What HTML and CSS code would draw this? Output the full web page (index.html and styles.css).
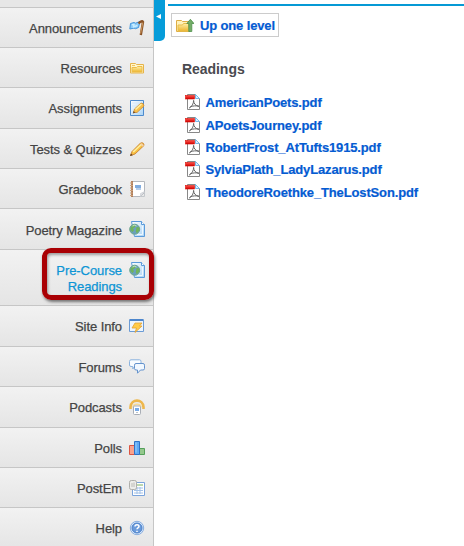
FILE: index.html
```html
<!DOCTYPE html>
<html lang="en">
<head>
<meta charset="utf-8">
<title>Readings</title>
<link rel="stylesheet" href="styles.css">
</head>
<body>
<svg class="defs" aria-hidden="true">
  <defs>
    <linearGradient id="gold" x1="0" y1="0" x2="0" y2="1"><stop offset="0" stop-color="#fff0a8"/><stop offset="1" stop-color="#edb52f"/></linearGradient>
    <linearGradient id="sky" x1="0" y1="0" x2="1" y2="1"><stop offset="0" stop-color="#ffffff"/><stop offset="1" stop-color="#a9d3f6"/></linearGradient>
    <linearGradient id="red" x1="0" y1="0" x2="0" y2="1"><stop offset="0" stop-color="#ff5148"/><stop offset="1" stop-color="#cf0000"/></linearGradient>
    <symbol id="web" viewBox="0 0 16 16">
      <path d="M2.5.5h10l3 3v12h-10z" fill="url(#sky)" stroke="#5b9bda"/>
      <path d="M12.5.5v3h3" fill="#fff" stroke="#5b9bda"/>
      <path d="M13.5 5v8.5H8" fill="none" stroke="#eef8ff"/>
      <circle cx="5.7" cy="8.2" r="5" fill="#6a9fc0" stroke="#6aa58a"/>
      <path d="M1.500 6.500 4 4l3 .3-1 2-2 1 1 2-1.500 2L1.500 9zM7.500 6l2.600.2.3 3-2.500 3-1.200-1.700z" fill="#70b45c"/>
      <path d="M3.500 5q2-1.400 4 0" fill="none" stroke="#c9e6c9"/>
    </symbol>
    <symbol id="pdf" viewBox="0 0 16 16">
      <path d="M2.500.5h8l4 4v11h-12z" fill="#fff" stroke="#888"/>
      <path d="M10.500.5l4 4h-4z" fill="#dcefff" stroke="#79b6e4"/>
      <path d="M4 14.200c3-1.700 4.600-4.500 4.600-7.800 0 3.200 2 5.400 5.400 5.900-3-.8-6-.5-8.800.6" fill="none" stroke="#666"/>
      <rect x=".5" y="1.500" width="9" height="3.500" fill="url(#red)" stroke="#d81008" stroke-width=".6"/>
    </symbol>
  </defs>
</svg>
<div class="page">
  <nav class="sidebar">
    <ul class="tools">
      <li></li>
      <li><a>Announcements</a>
        <svg class="icon" viewBox="0 0 16 16"><path d="M1.500 3.500l3.500-1 1.500.7 4.500-1.700-1.500 6-3 1.200-1.500-.6L.8 9z" fill="#8ccbf8" stroke="#4496dc"/><path d="M3 4.800l2-.3-.5 2.500 4-1.500" fill="none" stroke="#c9edff" stroke-width="1.400"/><path d="M9.500 3.500q3.500-3.500 4.500-1.500l-2.200 13" fill="none" stroke="#8a5327" stroke-width="2.400"/><path d="M13.800 2.500l-2.200 11" stroke="#d09b62"/></svg></li>
      <li><a>Resources</a>
        <svg class="icon" viewBox="0 0 16 16"><path d="M1.500 13v-9.500h5l1 1h7V13z" fill="#fff5cb" stroke="#e6b44a"/><path d="M3 12V7.500h4.500l1-1h4.500V12z" fill="url(#gold)" stroke="#edbd49"/><path d="M3 5.500h3" stroke="#f0c55e"/></svg></li>
      <li><a>Assignments</a>
        <svg class="icon" viewBox="0 0 16 16"><path d="M1.500.5h13v15h-13z" fill="url(#sky)" stroke="#4e8bce"/><path d="M3 3h8M3 6h5" stroke="#d6e9fb"/><path d="M4.500 12.500l1-3.500 6.500-6q3 0 3 3L8 12.500z" fill="#f8c04c" stroke="#c98a35" stroke-width=".8"/><path d="M6.500 9.500l6-5.500" stroke="#fff0a0" stroke-width="1.600"/><path d="M3.800 13.500l.8-2.500 1.900 1.800z" fill="#77502e"/></svg></li>
      <li><a>Tests &amp; Quizzes</a>
        <svg class="icon" viewBox="0 0 16 16"><path d="M1.500 14.500L3 10.500l8.500-8.500q3.500-1 3.500 2.500L6 13z" fill="#f8bf42" stroke="#c98434" stroke-width=".9"/><path d="M4.200 11l8-7.500" stroke="#fff09b" stroke-width="1.700"/><path d="M11 3l2.800 2.800 1-1.300-2-2.300z" fill="#f4d2ae"/><path d="M1 15l1-2.600 1.800 1.800z" fill="#674323"/></svg></li>
      <li><a>Gradebook</a>
        <svg class="icon" viewBox="0 0 16 16"><path d="M3.500.5h12v11l-4 4h-8z" fill="#fff" stroke="#b4b8be"/><path d="M15.500 10.500l-4 5v-3z" fill="#e2e4e8" stroke="#c4c8cc" stroke-width=".6"/><path d="M11.500 15.500h4v-4" fill="none" stroke="#c4c8cc"/><path d="M3 0v16" stroke="#a8693d" stroke-width="1.600"/><path d="M1 2h3M1 4.500h3M1 7h3M1 9.500h3M1 12h3M1 14.500h3" stroke="#cda27c"/><path d="M6 4h6v3H6z" fill="#80acdf"/><path d="M7 8h5" stroke="#6d9bd3"/></svg></li>
      <li class="low"><a>Poetry Magazine</a><svg class="icon"><use href="#web"/></svg></li>
      <li class="current"><a>Pre-Course<br>Readings</a><svg class="icon"><use href="#web"/></svg><span class="highlight"></span></li>
      <li><a>Site Info</a>
        <svg class="icon" viewBox="0 0 16 16"><path d="M.5 1.500h14v12H.5z" fill="#edf5fd" stroke="#6b9bd5"/><path d="M1 2h13" stroke="#4d86cc" stroke-width="2"/><path d="M6 5h7l-2.500 3H13l-7 6.500L7.500 10H3z" fill="#ffcb48" stroke="#e3a134" stroke-width=".8"/></svg></li>
      <li><a>Forums</a>
        <svg class="icon" viewBox="0 0 16 16"><path d="M2 .8h8.500q1.500 0 1.500 1.700V6q0 1.500-1.500 1.500H5.500L3.800 10V7.500H2Q.5 7.500.5 6V2.500Q.5.800 2 .8z" fill="#f8fcff" stroke="#8ab2de"/><path d="M7 4.500h7q1.500 0 1.500 1.700V9.500q0 1.500-1.500 1.500h-2.500l-3 3.200V11H7q-1.500 0-1.500-1.500V6.200q0-1.700 1.500-1.700z" fill="#f1f8ff" stroke="#6493cd"/></svg></li>
      <li><a>Podcasts</a>
        <svg class="icon" viewBox="0 0 16 16"><path d="M1.500 10V8C2-.5 14-.5 14.500 8v2" fill="none" stroke="#eeb74c" stroke-width="2.600"/><path d="M4 8.500c0-4.500 8-4.500 8 0" fill="none" stroke="#f7d995" stroke-width="1.500"/><rect x="4.500" y="7" width="7" height="8.500" rx="1" fill="#fff" stroke="#a9aeb6"/><path d="M6 9h4v3H6z" fill="#78abe8"/><path d="M7 13.500h2" stroke="#bcc2c8"/></svg></li>
      <li><a>Polls</a>
        <svg class="icon" viewBox="0 0 16 16"><path d="M.5 5.500h5v9h-5z" fill="#f9a38d" stroke="#dc5543"/><path d="M10.500 8.500h5v6h-5z" fill="#94c88c" stroke="#55a05b"/><path d="M5.500 1.500h5v13h-5z" fill="#5fa9f3" stroke="#2f72c6"/><path d="M7 2.500v10" stroke="#9bd0ff"/></svg></li>
      <li><a>PostEm</a>
        <svg class="icon" viewBox="0 0 16 16"><path d="M3.500 2.500h12v13h-12z" fill="#fff" stroke="#7ba4dc"/><path d="M7 5h7" stroke="#79b05c"/><path d="M5 8h9M5 10.500h9M5 13h9M8 7v7M11 7v7" stroke="#a3c2e8"/><rect x=".5" y=".5" width="7" height="9" rx="1.800" fill="#ededea" stroke="#aeaeaa"/><path d="M3 3v4M5 2.500v4.500" stroke="#bcbcb7"/></svg></li>
      <li><a>Help</a>
        <svg class="icon" viewBox="0 0 16 16"><circle cx="8" cy="8" r="6.700" fill="#d7e7fa" stroke="#8aafe0"/><circle cx="8" cy="8" r="5" fill="#6b9bdb" stroke="#4a80c8"/><path d="M6 6.500c0-2.500 4-2.500 4 0C10 8 8 7.800 8 9.300M8 10.800v1.300" fill="none" stroke="#fff" stroke-width="1.500"/></svg></li>
    </ul>
  </nav>
  <div class="toggle"><svg viewBox="0 0 5 5"><path d="M5 0v5L0 2.500z" fill="#fff"/></svg></div>
  <main class="content">
    <a class="up"><svg class="icon" viewBox="0 0 18 16"><path d="M.5 13.500v-11h5l1 1h7v10z" fill="#fff2bb" stroke="#deae45"/><path d="M2 13V7h4.500l1-1.500h5V13z" fill="url(#gold)" stroke="#e8bd4a"/><path d="M12.800 13.500V5.500h-2L14.400 1.300 18 5.500h-2.200v8z" fill="#73ad68" stroke="#4f8f4a" stroke-width=".8"/></svg>Up one level</a>
    <h1>Readings</h1>
    <ul class="files">
      <li><svg class="icon"><use href="#pdf"/></svg><a>AmericanPoets.pdf</a></li>
      <li><svg class="icon"><use href="#pdf"/></svg><a>APoetsJourney.pdf</a></li>
      <li><svg class="icon"><use href="#pdf"/></svg><a>RobertFrost_AtTufts1915.pdf</a></li>
      <li><svg class="icon"><use href="#pdf"/></svg><a>SylviaPlath_LadyLazarus.pdf</a></li>
      <li><svg class="icon"><use href="#pdf"/></svg><a>TheodoreRoethke_TheLostSon.pdf</a></li>
    </ul>
  </main>
</div>
</body>
</html>
```
FILE: styles.css
```css
* { box-sizing: border-box; }
body {
  margin: 0;
  background: #fff;
  font: 13px/16px "Liberation Sans", Arial, sans-serif;
  color: #444;
}
ul { list-style: none; margin: 0; padding: 0; }
.defs { position: absolute; width: 0; height: 0; }
.page { display: flex; height: 546px; overflow: hidden; }
.icon { display: block; flex: none; width: 16px; height: 16px; }

.sidebar { flex: none; width: 154px; border-right: 1px solid #c6c6c6; }
.tools {
  display: grid;
  grid-template-rows: 8px 40px 40px 41px 40px 40px 41px 56px 41px 40px 41px 40px 40px 41px;
}
.tools li {
  position: relative;
  display: flex;
  justify-content: flex-end;
  align-items: flex-start;
  gap: 7px;
  padding: 13px 8px 0 0;
  border-bottom: 1px solid #c6c6c6;
  background: linear-gradient(#f2f2f2, #e5e5e5);
  text-align: right;
}
.tools li:first-child { padding: 0; background: #e7e7e7; }
.tools a { letter-spacing: -0.08px; -webkit-text-stroke: 0.25px; }
.tools .low a { padding-top: 1px; }
.tools .current a { color: #0d95d5; }
.highlight {
  position: absolute;
  left: 42px;
  top: -2px;
  width: 112px;
  height: 52px;
  border: 5px solid #a90004;
  border-radius: 9px;
  box-shadow: 1px 2px 3px rgba(0, 0, 0, .5), inset 1px 2px 3px rgba(0, 0, 0, .35);
  z-index: 1;
}
.tools .icon { margin-top: -1px; }

.toggle {
  flex: none;
  display: flex;
  justify-content: center;
  width: 11px;
  height: 41px;
  padding: 14px 2px 0 0;
  border-radius: 0 0 5px 0;
  background: #069cd9;
}
.toggle svg { width: 5px; height: 5px; }

.content { flex: 1; margin: 4px 0 0 3px; border-top: 2px solid #0599d5; }
.content a { color: #045bd2; font-weight: bold; letter-spacing: -0.14px; -webkit-text-stroke: 0.2px; }
.content .up {
  display: flex;
  gap: 6px;
  width: 108px;
  height: 24px;
  margin: 7px 0 0 3px;
  padding: 4px 0 0 4px;
  border: 1px solid #ccc;
  white-space: nowrap;
}
.up .icon { width: 18px; }
h1 { margin: 24px 0 0 14px; font-size: 14px; line-height: 16px; letter-spacing: -0.05px; color: #4a4a4f; }
.files { display: grid; grid-template-rows: 23px 22px 22px 23px 22px; margin: 17px 0 0 17px; }
.files li { display: flex; gap: 4.500px; }
.files a { padding-top: 1px; }
```
